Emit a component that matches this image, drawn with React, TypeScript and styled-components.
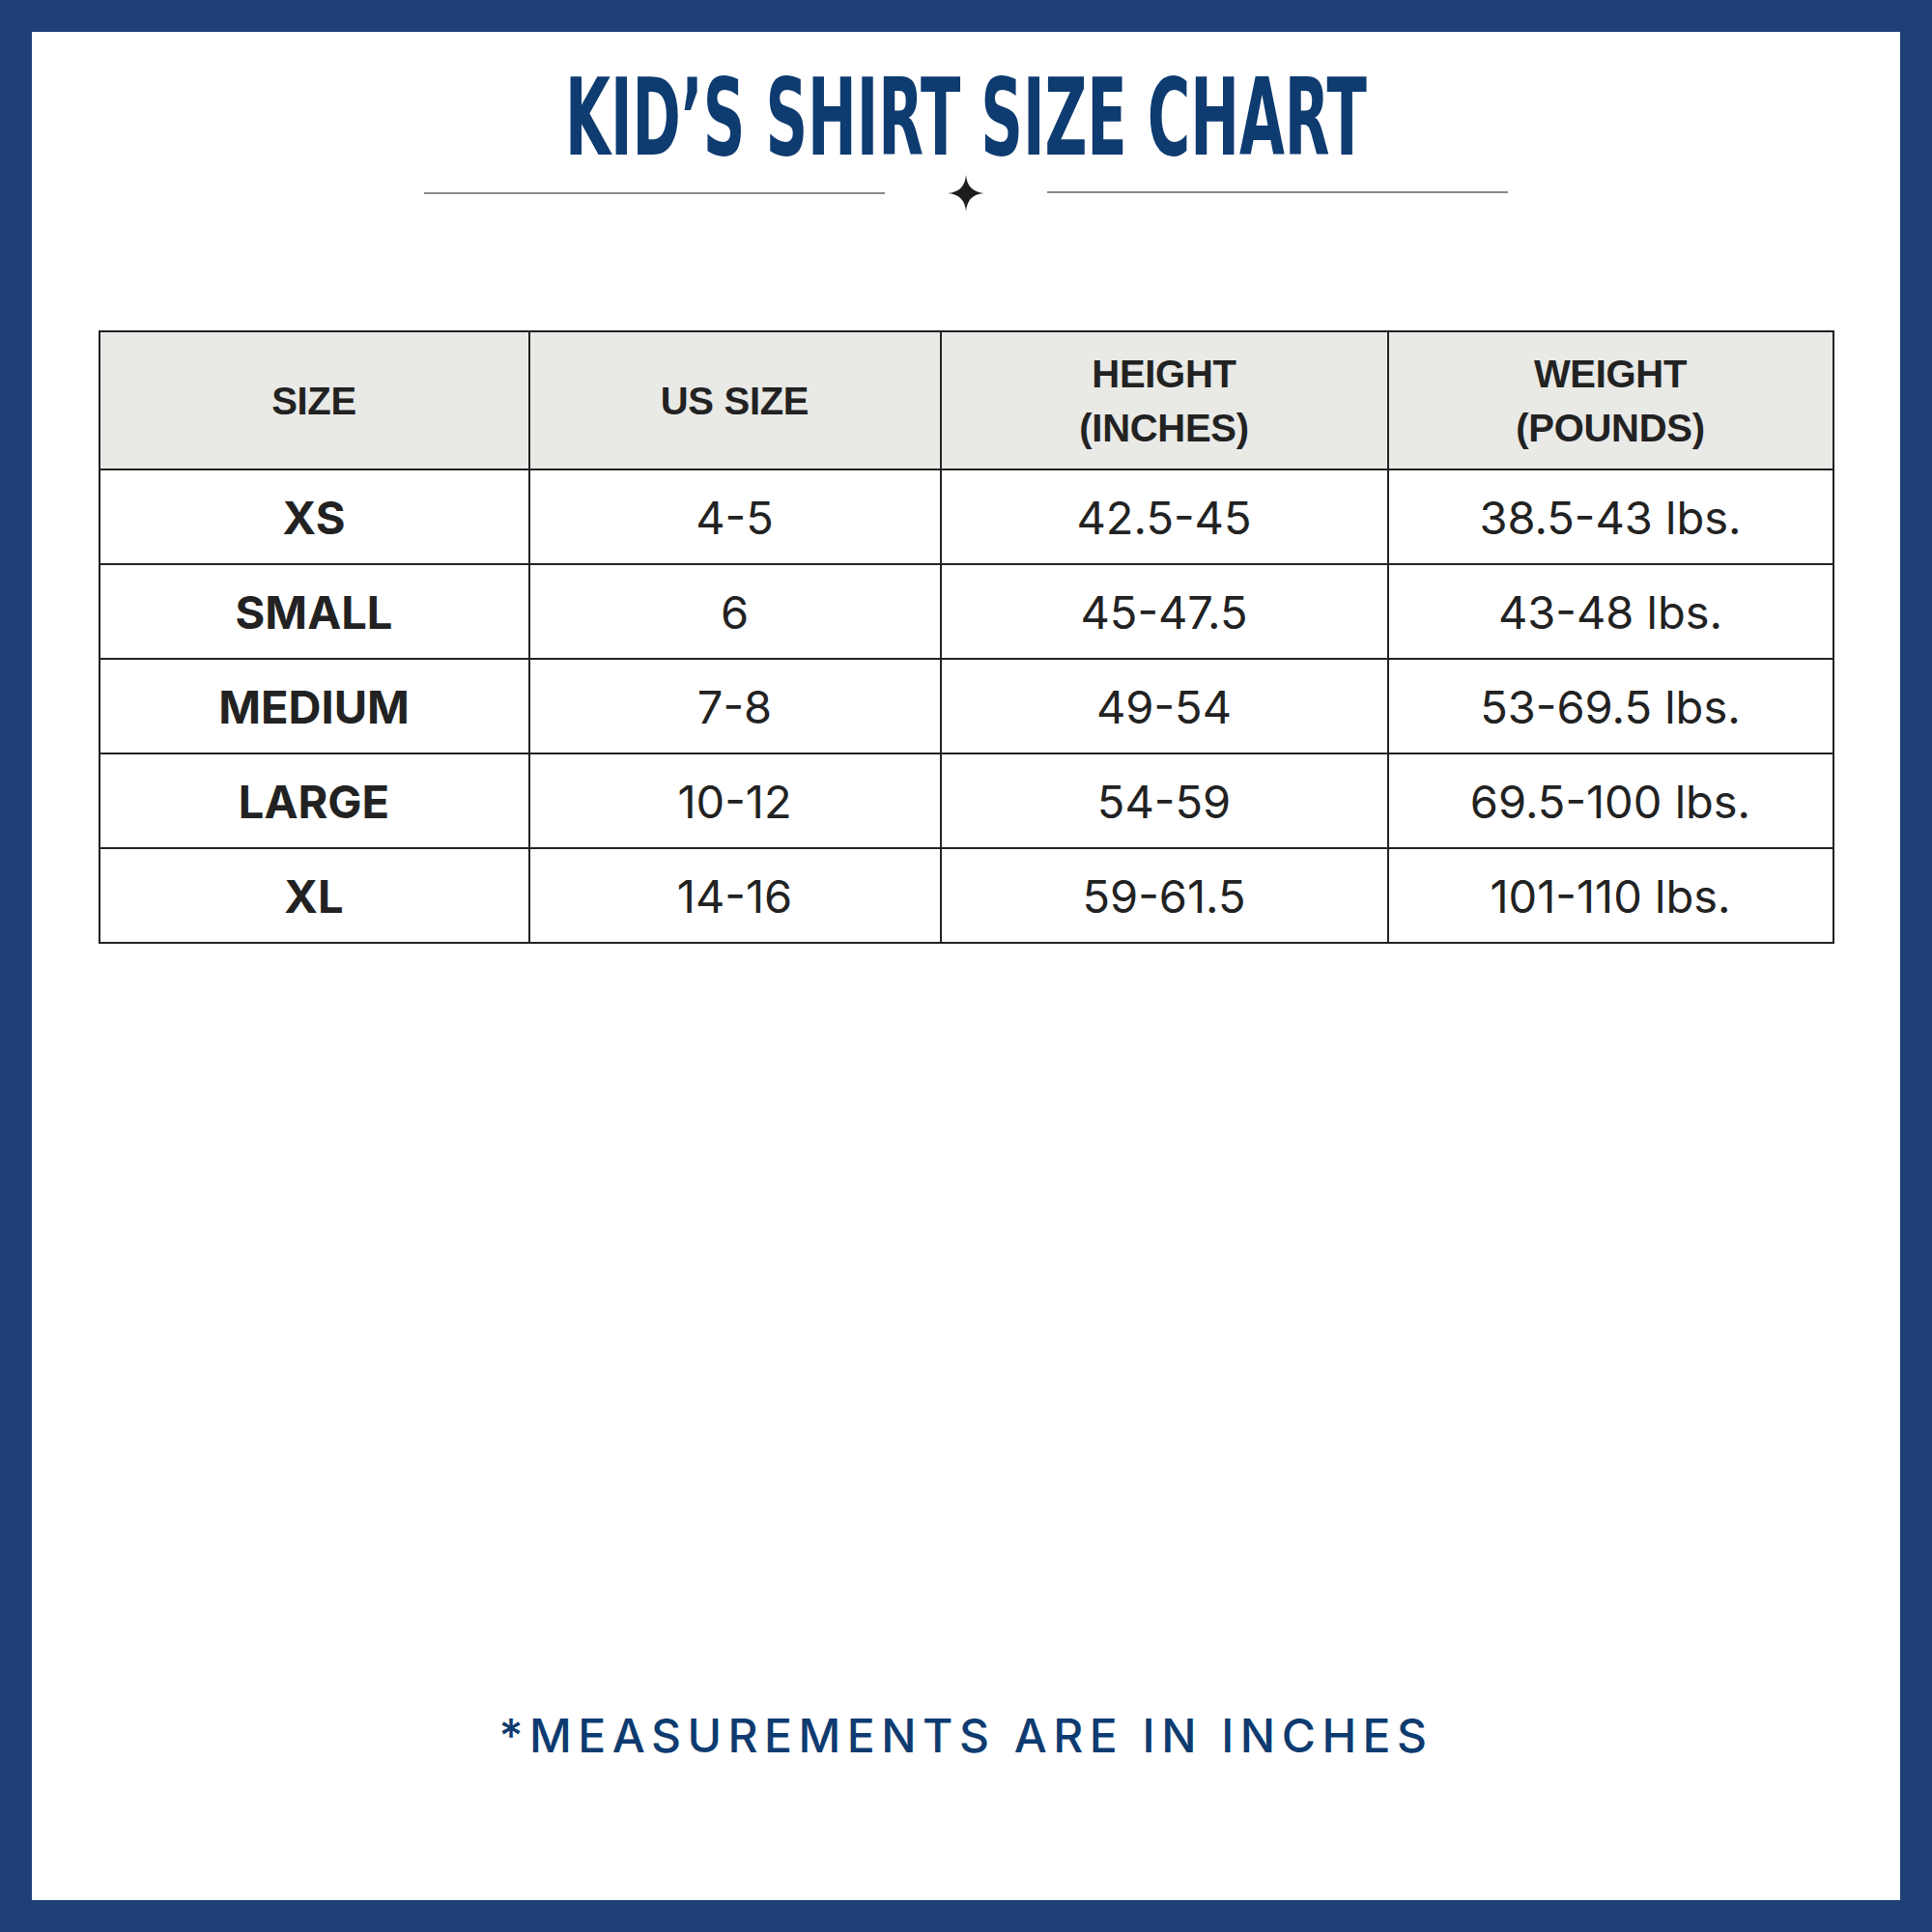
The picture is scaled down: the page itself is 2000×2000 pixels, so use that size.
import styled, { createGlobalStyle } from "styled-components";

const NAVY = "#1e4076";
const INK = "#0e3b70";
const TEXT = "#222222";

type Row = {
  size: string;
  us: string;
  height: string;
  weight: string;
};

const ROWS: Row[] = [
  { size: "XS", us: "4-5", height: "42.5-45", weight: "38.5-43 lbs." },
  { size: "SMALL", us: "6", height: "45-47.5", weight: "43-48 lbs." },
  { size: "MEDIUM", us: "7-8", height: "49-54", weight: "53-69.5 lbs." },
  { size: "LARGE", us: "10-12", height: "54-59", weight: "69.5-100 lbs." },
  { size: "XL", us: "14-16", height: "59-61.5", weight: "101-110 lbs." },
];

const GlobalStyle = createGlobalStyle`
  html, body {
    margin: 0;
    padding: 0;
    background: #ffffff;
  }
`;

const Star = () => (
  <svg width="38" height="38" viewBox="0 0 38 38">
    <path
      d="M19 0 Q20.3 17.7 38 19 Q20.3 20.3 19 38 Q17.7 20.3 0 19 Q17.7 17.7 19 0 Z"
      fill="#1d1d1d"
    />
  </svg>
);

export default function App() {
  return (
    <>
      <GlobalStyle />
      <Frame>
        <Sheet>
          <TitleWrap>
            <Title>KID’S SHIRT SIZE CHART</Title>
          </TitleWrap>
          <Divider>
            <Rule />
            <Star />
            <Rule $lift />
          </Divider>

          <Table>
            <HeadCell>SIZE</HeadCell>
            <HeadCell>US SIZE</HeadCell>
            <HeadCell>
              HEIGHT
              <br />
              (INCHES)
            </HeadCell>
            <HeadCell>
              WEIGHT
              <br />
              (POUNDS)
            </HeadCell>
            {ROWS.map((row) => [
              <Cell key={row.size + "-s"} $bold>
                {row.size}
              </Cell>,
              <Cell key={row.size + "-u"}>{row.us}</Cell>,
              <Cell key={row.size + "-h"}>{row.height}</Cell>,
              <Cell key={row.size + "-w"}>{row.weight}</Cell>,
            ])}
          </Table>

          <Footnote>*MEASUREMENTS ARE IN INCHES</Footnote>
        </Sheet>
      </Frame>
    </>
  );
}

const Frame = styled.div`
  width: 2000px;
  height: 2000px;
  box-sizing: border-box;
  padding: 33px;
  background: ${NAVY};
`;

const Sheet = styled.div`
  height: 100%;
  background: #ffffff;
  display: flex;
  flex-direction: column;
  align-items: center;
`;

const TitleWrap = styled.div`
  padding-top: 34px;
  height: 110px;
  display: flex;
  justify-content: center;
`;

const Title = styled.h1`
  margin: 0;
  font-family: "DejaVu Sans", sans-serif;
  font-stretch: condensed;
  font-weight: 700;
  font-size: 110px;
  line-height: 110px;
  color: ${INK};
  white-space: nowrap;
  transform: scaleX(0.612);
`;

const Divider = styled.div`
  margin-top: 4px;
  display: flex;
  align-items: center;
  gap: 65px;
  height: 38px;
`;

const Rule = styled.div<{ $lift?: boolean }>`
  width: 477px;
  height: 2px;
  background: #8a8a8a;
  transform: translateY(${({ $lift }) => ($lift ? "-1px" : "0")});
`;

const Table = styled.div`
  margin-top: 123px;
  display: grid;
  grid-template-columns: 445px 426px 463px 461px;
  grid-template-rows: 143px repeat(5, 98px);
  border-left: 2px solid ${TEXT};
  border-top: 2px solid ${TEXT};
`;

const BaseCell = styled.div`
  box-sizing: border-box;
  border-right: 2px solid ${TEXT};
  border-bottom: 2px solid ${TEXT};
  display: flex;
  align-items: center;
  justify-content: center;
  text-align: center;
  color: ${TEXT};
`;

const HeadCell = styled(BaseCell)`
  background: #e9e9e6;
  font-family: "Liberation Sans", Arial, sans-serif;
  font-weight: 700;
  font-size: 40px;
  line-height: 56px;
  letter-spacing: -0.3px;
`;

const Cell = styled(BaseCell)<{ $bold?: boolean }>`
  font-family: Inter, "Liberation Sans", sans-serif;
  font-weight: ${({ $bold }) => ($bold ? 700 : 400)};
  font-size: 47px;
  line-height: 1;
`;

const Footnote = styled.div`
  margin-top: auto;
  padding-bottom: 146px;
  font-family: Inter, "Liberation Sans", sans-serif;
  font-weight: 500;
  font-size: 48px;
  line-height: 48px;
  letter-spacing: 6.5px;
  color: ${INK};
  white-space: nowrap;
`;
